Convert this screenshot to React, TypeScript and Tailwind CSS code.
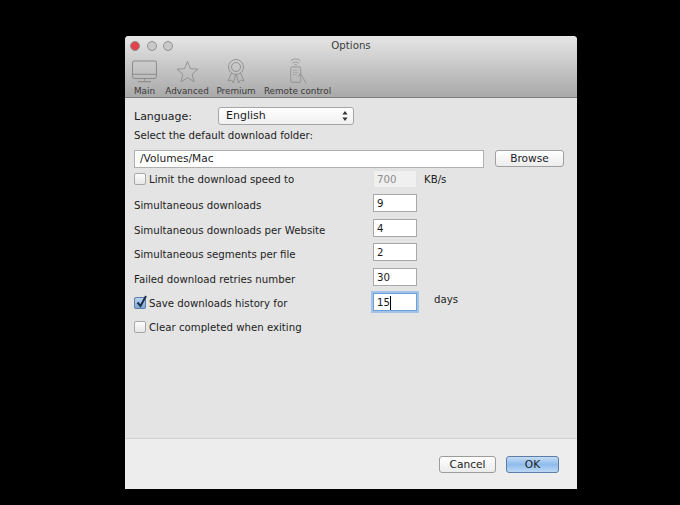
import React from 'react'

const labelFont = "[font-family:'DejaVu_Sans',sans-serif]"

const TrafficLight = ({ color }: { color: string }) => (
  <span className={`w-[10px] h-[10px] rounded-full border border-[#8f8f8f] ${color}`} />
)

const MainIcon = () => (
  <svg width="27" height="23" viewBox="0 0 28 25" fill="none" stroke="#8c8c8c" strokeWidth="1.1">
    <rect x="1" y="1" width="26" height="19" rx="2" />
    <path d="M1 15.5h26M14 20v2.5M7 23.5h14" />
  </svg>
)

const StarIcon = () => (
  <svg width="23" height="23" viewBox="0 0 24 24" fill="none" stroke="#8c8c8c" strokeWidth="0.9">
    <path d="M12 1.5l3 7.6 8 .5-6.2 5.2 2 8-6.8-4.4-6.8 4.4 2-8L1 9.6l8-.5z" />
  </svg>
)

const RibbonIcon = () => (
  <svg width="20" height="26" viewBox="0 0 20 26" fill="none" stroke="#8c8c8c" strokeWidth="0.9">
    <circle cx="10" cy="9" r="7.5" />
    <circle cx="10" cy="9" r="4.5" />
    <path d="M5.5 15L2 23l3.5-1 2 3 2-8M14.5 15l3.5 8-3.5-1-2 3-2-8" />
  </svg>
)

const RemoteIcon = () => (
  <svg width="20" height="28" viewBox="0 0 22 29" fill="none" stroke="#8c8c8c" strokeWidth="0.9">
    <path d="M3 3.5C6 .5 11 .5 14 3.5M5 6c2-1.8 5-1.8 7 0M7 8c1-.8 2-.8 3 0" />
    <rect x="3" y="10" width="11" height="17" rx="1.5" />
    <path d="M5.5 13.5h6M5.5 16h6M5.5 18.5h4" strokeDasharray="1.5 1" />
    <path d="M11 21l2-3 2 1 2 4 3 5" />
  </svg>
)

const ToolbarItem = ({ icon, label, width }: { icon: React.ReactNode; label: string; width: string }) => (
  <div className={`flex flex-col items-center ${width}`}>
    <div className="h-[28px] flex items-center">{icon}</div>
    <span className="text-[8.8px] leading-[12px] text-[#3a3a3a] whitespace-nowrap">{label}</span>
  </div>
)

const Checkbox = ({ checked }: { checked?: boolean }) => (
  <span className="relative w-[12px] h-[12px] shrink-0 rounded-[2px] border border-[#a8a8a8] bg-gradient-to-b from-[#fdfdfd] to-[#e6e6e6]">
    {checked && (
      <>
        <span className="absolute inset-[-1px] rounded-[2px] border border-[#5d7fa8] bg-gradient-to-b from-[#bcd3ee] to-[#7ea7d8]" />
        <svg className="absolute left-[0px] top-[-4px]" width="13" height="15" viewBox="0 0 13 15" fill="none">
          <path d="M2.5 8.5l3 3.5L11 2" stroke="#1d2f4a" strokeWidth="2" />
        </svg>
      </>
    )}
  </span>
)

const NumberBox = ({ value, dim, focus }: { value: string; dim?: boolean; focus?: boolean }) => (
  <div
    className={`w-[44px] h-[18px] flex items-center pl-[3px] pt-[1px] border ${
      dim
        ? 'border-[#e2e2e2] bg-[#f0f0f0] text-[#8d8d8d]'
        : focus
          ? 'border-[#6d9fd8] bg-white ring-2 ring-[#a3c3e8] text-[#1a1a1a]'
          : 'border-[#a8a8a8] bg-white text-[#1a1a1a]'
    }`}
  >
    {value}
    {focus && <span className="w-px h-[14px] bg-black" />}
  </div>
)

const NumberRow = ({ label, value, className }: { label: string; value: string; className: string }) => (
  <div className={`flex items-center h-[18px] ${className}`}>
    <span className="w-[239px] pt-[6px]">{label}</span>
    <NumberBox value={value} />
  </div>
)

export default function App() {
  return (
    <div className="w-[680px] h-[505px] bg-black pt-[36px] pl-[125px] overflow-hidden">
      <div className={`w-[452px] h-[453px] flex flex-col bg-[#ededed] rounded-t-[4px] text-[10.2px] text-[#1c1c1c] ${labelFont}`}>
        {/* title bar and toolbar */}
        <div className="relative h-[62px] shrink-0 rounded-t-[4px] bg-gradient-to-b from-[#e6e6e6] to-[#a9a9a9] border-b border-[#7c7c7c]">
          <div className="absolute left-[5px] top-[5px] flex gap-[6.5px]">
            <TrafficLight color="bg-[#e5434a]" />
            <TrafficLight color="bg-[#c9c9c9]" />
            <TrafficLight color="bg-[#c9c9c9]" />
          </div>
          <div className="pt-[3px] text-center text-[10.2px] leading-[14px] text-[#3c3c3c]">Options</div>
          <div className="flex pl-[4px] mt-[4px]">
            <ToolbarItem icon={<MainIcon />} label="Main" width="w-[31px]" />
            <ToolbarItem icon={<StarIcon />} label="Advanced" width="w-[54px]" />
            <ToolbarItem icon={<RibbonIcon />} label="Premium" width="w-[44px]" />
            <ToolbarItem icon={<RemoteIcon />} label="Remote control" width="w-[79px]" />
          </div>
        </div>

        {/* options */}
        <div className="h-[341px] shrink-0 bg-[#e4e4e4] border-b border-[#d0d0d0] pl-[9px] pr-[13px] pt-[9px]">
          <div className="flex items-center h-[18px]">
            <span className="w-[84px] pt-[3px] text-[11px]">Language:</span>
            <div className="w-[136px] h-[18px] flex items-center justify-between pl-[7px] pr-[5px] rounded-[3px] border border-[#a6a6a6] bg-gradient-to-b from-[#ffffff] to-[#f0f0f0] text-[11px]">
              <span>English</span>
              <svg width="6" height="10" viewBox="0 0 6 10" fill="#333">
                <path d="M3 0l2.6 3.6H.4zM3 10L.4 6.4h5.2z" />
              </svg>
            </div>
          </div>
          <div className="mt-[2px] h-[18px] leading-[18px]">Select the default download folder:</div>
          <div className="mt-[5px] flex items-start">
            <div className="w-[350px] h-[18px] flex items-center pl-[5px] bg-white border border-[#b0b0b0] text-[10.6px]">/Volumes/Mac</div>
            <div className="ml-[11px] w-[69px] h-[17px] flex items-center justify-center rounded-[3px] border border-[#a0a0a0] bg-gradient-to-b from-[#ffffff] to-[#ececec] text-[10.6px]">
              Browse
            </div>
          </div>
          <div className="mt-[2px] flex items-center h-[18px]">
            <span className="w-[239px] flex items-center gap-[3px]">
              <Checkbox />
              <span className="pt-[2px]">Limit the download speed to</span>
            </span>
            <NumberBox value="700" dim />
            <span className="ml-[7px] pt-[1px]">KB/s</span>
          </div>
          <NumberRow label="Simultaneous downloads" value="9" className="mt-[6px]" />
          <NumberRow label="Simultaneous downloads per Website" value="4" className="mt-[7px]" />
          <NumberRow label="Simultaneous segments per file" value="2" className="mt-[6px]" />
          <NumberRow label="Failed download retries number" value="30" className="mt-[7px]" />
          <div className="mt-[7px] flex items-center h-[18px]">
            <span className="w-[239px] flex items-center gap-[3px] pt-[1px]">
              <Checkbox checked />
              <span className="pt-[3px]">Save downloads history for</span>
            </span>
            <NumberBox value="15" focus />
            <span className="ml-[17px] -mt-[4px]">days</span>
          </div>
          <div className="mt-[7px] flex items-center gap-[3px] h-[18px]">
            <Checkbox />
            <span className="pt-[2px]">Clear completed when exiting</span>
          </div>
        </div>

        {/* footer buttons */}
        <div className="flex justify-end gap-[10px] pt-[17px] pr-[18px] text-[10.6px]">
          <div className="w-[57px] h-[17px] flex items-center justify-center rounded-[3px] border border-[#9c9c9c] bg-gradient-to-b from-[#ffffff] to-[#ebebeb]">
            Cancel
          </div>
          <div className="w-[53px] h-[17px] flex items-center justify-center rounded-[3px] border border-[#5a7ea8] bg-gradient-to-b from-[#c6dcf5] via-[#8fbcec] to-[#bcd8f6]">
            OK
          </div>
        </div>
      </div>
    </div>
  )
}
